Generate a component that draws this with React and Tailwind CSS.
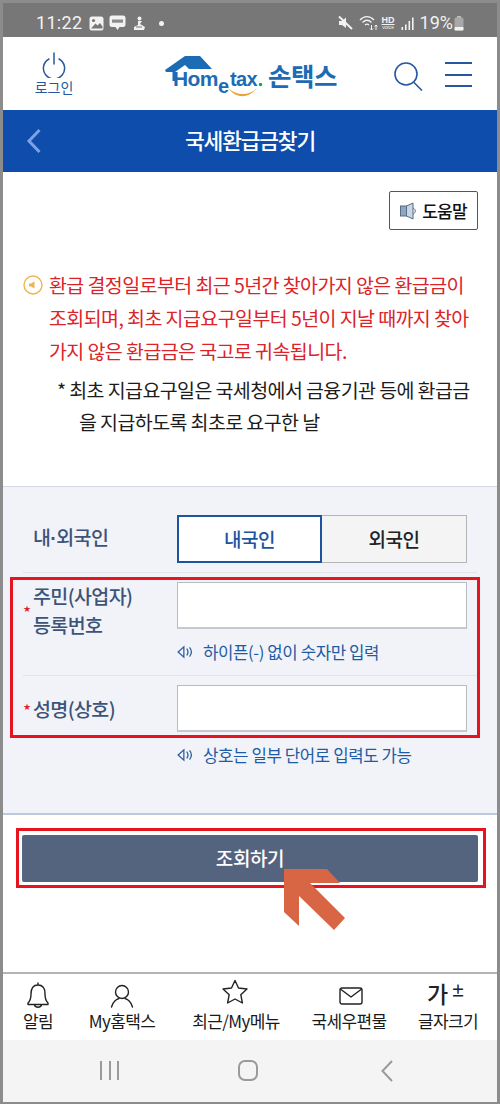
import React from "react";

const KR = { fontFamily: '"Noto Sans CJK KR","Noto Sans",sans-serif' };

function StatusBar() {
  return (
    <div className="h-[34px] bg-[#777777] flex items-center justify-between pl-[33px] pr-[33px] pt-[6px] text-[#f2f2f2] shrink-0">
      <div className="flex items-center">
        <span className="text-[18px] leading-none tracking-[0.3px] font-['Roboto']">11:22</span>
        <svg width="15" height="15" viewBox="0 0 15 15" className="ml-[7px]">
          <rect x="0.5" y="0.5" width="14" height="14" rx="2.5" fill="#f2f2f2" />
          <circle cx="4.5" cy="4.5" r="1.6" fill="#777" />
          <path d="M2 12.5 L6.5 7.5 L8.5 9.5 L11 7 L13.5 10.5 V12.5 Z" fill="#777" />
        </svg>
        <svg width="17" height="16" viewBox="0 0 17 16" className="ml-[5px]">
          <path d="M3 0.5 H14 A2.5 2.5 0 0 1 16.5 3 V9.5 A2.5 2.5 0 0 1 14 12 H10.5 L8.5 15 L6.5 12 H3 A2.5 2.5 0 0 1 0.5 9.5 V3 A2.5 2.5 0 0 1 3 0.5 Z" fill="#f2f2f2" />
          <rect x="3" y="4.5" width="11" height="3.2" fill="#8b8b8b" />
        </svg>
        <svg width="13" height="15" viewBox="0 0 13 15" className="ml-[7px]">
          <circle cx="6.5" cy="2.4" r="2" fill="#f2f2f2" />
          <path d="M5 5 L9 5 L7 8 L12 11 L11 14 L1 14 L1 11 L5 9 Z" fill="#f2f2f2" />
          <path d="M3 11 H9" stroke="#777" strokeWidth="1" />
        </svg>
        <span className="ml-[13px] w-[5px] h-[5px] rounded-full bg-[#f2f2f2]" />
      </div>
      <div className="flex items-center">
        <svg width="15" height="14" viewBox="0 0 15 14">
          <path d="M1 5 H4 L8 1.5 V12 L4 9 H1 Z" fill="#f2f2f2" />
          <path d="M1 0.5 L14 13" stroke="#f2f2f2" strokeWidth="2" />
        </svg>
        <svg width="20" height="16" viewBox="0 0 20 16" className="ml-[6px]" fill="none" stroke="#f2f2f2" strokeWidth="1.3">
          <path d="M1 5 C5 0.5 11 0.5 15 5" />
          <path d="M3.5 7.5 C6.5 4.5 9.5 4.5 12.5 7.5" />
          <path d="M6 10 C7.5 8.6 8.5 8.6 10 10" />
          <path d="M12.5 10 V15 M11 13.5 L12.5 15 L14 13.5 M17 15 V10 M15.5 11.5 L17 10 L18.5 11.5" strokeWidth="1" />
        </svg>
        <div className="ml-[2px] flex flex-col items-center leading-none w-[15px] font-['Liberation_Sans']">
          <span className="text-[9px] font-bold leading-[9px] underline">HD</span>
          <span className="text-[5px] leading-[5px]">voice</span>
        </div>
        <svg width="13" height="13" viewBox="0 0 13 13" className="ml-[5px]" fill="#f2f2f2">
          <rect x="0.5" y="10" width="1.6" height="3" />
          <rect x="4" y="7.5" width="1.6" height="5.5" />
          <rect x="7.5" y="4" width="1.6" height="9" />
          <rect x="11" y="0.5" width="1.6" height="12.5" />
        </svg>
        <span className="ml-[6px] text-[18px] leading-none font-['Roboto']">19%</span>
        <svg width="10" height="15" viewBox="0 0 10 15" className="ml-[1px]">
          <rect x="3" y="0" width="4" height="2" fill="#bdbdbd" />
          <rect x="0.5" y="1.5" width="9" height="13" rx="1.5" fill="#a8a8a8" />
          <rect x="0.5" y="11" width="9" height="3.5" rx="1" fill="#f2f2f2" />
        </svg>
      </div>
    </div>
  );
}

function Logo() {
  return (
    <div className="flex items-end h-[48px] relative">
      <div className="relative w-[100px] h-[48px]">
        <svg width="100" height="48" viewBox="0 0 100 48" className="absolute left-0 top-0">
          <path d="M0 15 L20 1 H35 L47 14 H24 L20 10 L10 17 V26 H7.5 V17 H1 Z" fill="#1c6cb5" />
          <path d="M63 33 C72 41 84 41 92 33 C84 44 71 44 63 33 Z" fill="#e9a33c" />
          <circle cx="95.5" cy="29.5" r="1.7" fill="#1ea048" />
        </svg>
        <span className="absolute left-[8px] top-[12px] text-[#1c6cb5] text-[21px] leading-[24px] font-bold tracking-[-0.6px] font-['Liberation_Sans']">Hom</span>
        <span className="absolute left-[53px] top-[19px] text-[#1c6cb5] text-[20px] leading-[24px] font-bold font-['Liberation_Sans']">e</span>
        <span className="absolute left-[65px] top-[12px] text-[#1c6cb5] text-[20px] leading-[24px] font-bold tracking-[-0.6px] font-['Liberation_Sans']">tax</span>
      </div>
      <span style={KR} className="ml-[3px] mb-[13px] text-[#1c6cb5] text-[25.5px] leading-[30px] font-bold tracking-[-0.5px]">손택스</span>
    </div>
  );
}

function Header() {
  return (
    <div className="h-[73px] bg-white flex items-start shrink-0 relative">
      <div className="w-[102px] flex flex-col items-center pt-[15px]">
        <svg width="24" height="26" viewBox="0 0 24 26" fill="none" stroke="#27589f" strokeWidth="1.5" strokeLinecap="round">
          <path d="M7 7 A10.6 10.6 0 1 0 17 7" />
          <path d="M12 1 V12" />
        </svg>
        <span style={KR} className="text-[#27589f] text-[14px] leading-[16px] mt-[1px]">로그인</span>
      </div>
      <div className="mt-[18px] ml-[60px]"><Logo /></div>
      <svg width="30" height="30" viewBox="0 0 30 30" fill="none" stroke="#27589f" strokeWidth="1.6" className="absolute left-[390px] top-[24px]">
        <circle cx="13" cy="13" r="11" />
        <path d="M20.5 21 L29 29.5" />
      </svg>
      <div className="absolute left-[442px] top-[25px] w-[27px] h-[25px] flex flex-col justify-between">
        <div className="h-[2px] bg-[#27589f]" />
        <div className="h-[2px] bg-[#27589f]" />
        <div className="h-[2px] bg-[#27589f]" />
      </div>
    </div>
  );
}

function TitleBar() {
  return (
    <div className="h-[62px] bg-[#0e4dab] flex items-center justify-center relative shrink-0">
      <svg width="16" height="26" viewBox="0 0 16 26" fill="none" stroke="#7ba3e3" strokeWidth="3" className="absolute left-[23px] top-[18px]">
        <path d="M13.5 2 L3 13 L13.5 24" />
      </svg>
      <span style={KR} className="text-white text-[21.5px] font-medium tracking-[-1.2px] leading-[28px] -mt-[3px]">국세환급금찾기</span>
    </div>
  );
}

function Help() {
  return (
    <div className="flex justify-end pr-[19px] pt-[19px]">
      <div className="w-[89px] h-[39px] border border-[#555] rounded-[2px] flex items-center justify-center bg-white">
        <svg width="18" height="18" viewBox="0 0 18 18" className="shrink-0">
          <rect x="0.5" y="4" width="6" height="10" fill="#8aa6c8" stroke="#5c6b7d" />
          <path d="M6.5 4 L13 1 V17 L6.5 14 Z" fill="#c6d7ea" stroke="#5c6b7d" />
          <path d="M13 6 C16 7 16 11 13 12" fill="none" stroke="#5c6b7d" />
        </svg>
        <span style={KR} className="ml-[4px] text-[#111] text-[17px] font-medium tracking-[-0.8px] leading-[22px]">도움말</span>
      </div>
    </div>
  );
}

function Notice() {
  return (
    <div style={KR} className="relative pl-[46px] pr-[10px] mt-[38px]">
      <svg width="20" height="20" viewBox="0 0 20 20" className="absolute left-[20px] top-[7px]">
        <circle cx="10" cy="10" r="9" fill="#fff" stroke="#efb451" strokeWidth="1.4" />
        <path d="M6 8.5 H8 L11.5 6.5 V13.5 L8 11.5 H6 Z" fill="#efb451" />
      </svg>
      <div className="text-[#dc2328] text-[19.5px] leading-[33px] tracking-[-0.58px] whitespace-nowrap">
        <div>환급 결정일로부터 최근 5년간 찾아가지 않은 환급금이</div>
        <div>조회되며, 최초 지급요구일부터 5년이 지날 때까지 찾아</div>
        <div>가지 않은 환급금은 국고로 귀속됩니다.</div>
      </div>
      <div className="text-[#1c1c1c] text-[19.5px] leading-[32px] tracking-[-0.6px] whitespace-nowrap mt-[7px] ml-[8px]">
        <div>* 최초 지급요구일은 국세청에서 금융기관 등에 환급금</div>
        <div className="pl-[22px]">을 지급하도록 최초로 요구한 날</div>
      </div>
    </div>
  );
}

function HintIcon() {
  return (
    <svg width="16" height="14" viewBox="0 0 14 12" fill="none" stroke="#2a5b9e" strokeWidth="1.1" className="shrink-0">
      <path d="M1 6 L6 1.5 V10.5 Z" />
      <path d="M8.5 3 C10 5 10 7 8.5 9 M11 2 C13 4.5 13 7.5 11 10" />
    </svg>
  );
}

function Hint({ children }) {
  return (
    <div style={KR} className="flex items-center mt-[12px] text-[#1f5ba3] text-[16.8px] leading-[22px] tracking-[-0.42px] whitespace-nowrap">
      <HintIcon />
      <span className="ml-[10px]">{children}</span>
    </div>
  );
}

function Star({ className }) {
  return <span className={"absolute left-0 text-[#e0202a] text-[9px] leading-none font-['DejaVu_Sans'] " + className}>★</span>;
}

function Form() {
  const label = "text-[#3d5478] text-[19.5px] font-medium tracking-[-0.6px] whitespace-nowrap";
  const input = "w-[290px] h-[47px] bg-white border border-[#b9bbc0] border-b-2 border-b-[#c6c8cc]";
  return (
    <div style={KR} className="h-[329px] bg-[#f1f3f9] border-t border-[#d4d8e4] border-b-2 border-b-[#bccadf] shrink-0 px-[20px]">
      <div className="h-[86px] flex items-start border-b border-[#e2e4ea] pl-[10px] pt-[28px]">
        <span className={label + " w-[144px] leading-[48px] -mt-[2px]"}>내<span className="font-['Liberation_Sans'] font-bold">·</span>외국인</span>
        <div className="flex h-[48px]">
          <div className="w-[145px] bg-white border-2 border-[#1d539f] flex items-center justify-center text-[#1d539f] text-[19px] font-medium tracking-[-0.5px]">내국인</div>
          <div className="w-[145px] bg-[#f4f4f4] border border-l-0 border-[#b5b5b5] flex items-center justify-center text-[#222] text-[19px] font-medium tracking-[-0.5px]">외국인</div>
        </div>
      </div>
      <div className="h-[103px] border-b border-[#e2e4ea] relative pl-[10px] flex">
        <Star className="top-[32px]" />
        <div className={label + " w-[144px] leading-[29px] pt-[8px]"}>
          <div>주민(사업자)</div>
          <div>등록번호</div>
        </div>
        <div className="pt-[9px]">
          <div className={input} />
          <Hint>하이픈(-) 없이 숫자만 입력</Hint>
        </div>
      </div>
      <div className="relative pl-[10px] flex">
        <Star className="top-[27px]" />
        <div className={label + " w-[144px] pt-[18px] leading-[29px]"}>
          <span>성명(상호)</span>
        </div>
        <div className="pt-[9px]">
          <div className={input} />
          <Hint>상호는 일부 단어로 입력도 가능</Hint>
        </div>
      </div>
    </div>
  );
}

function NavItem({ label, icon, className }) {
  return (
    <div className={"absolute top-0 flex flex-col items-center " + className}>
      <div className="h-[34px] flex items-end justify-center">{icon}</div>
      <span style={KR} className="text-[#1a1a1a] text-[17px] leading-[22px] tracking-[-0.6px] whitespace-nowrap mt-[2px]">{label}</span>
    </div>
  );
}

function BottomNav() {
  const s = { fill: "none", stroke: "#222", strokeWidth: 1.4, strokeLinejoin: "round", strokeLinecap: "round" };
  return (
    <div className="h-[68px] bg-white border-t-2 border-[#b4b4b4] relative shrink-0">
      <NavItem className="left-[20px] w-[30px]" label="알림" icon={
        <svg width="24" height="26" viewBox="0 0 24 26" {...s}><path d="M12 1 V3 M12 3 C6 3 5 8 5 12 C5 17 4 19 2 21 V22.5 H22 V21 C20 19 19 17 19 12 C19 8 18 3 12 3 Z M8.5 23 C9.5 26 14.5 26 15.5 23" /></svg>
      } />
      <NavItem className="left-[86px] w-[66px]" label="My홈택스" icon={
        <svg width="24" height="24" viewBox="0 0 24 24" {...s}><circle cx="12" cy="8" r="6.5" /><path d="M1.5 23 C3 17.5 7 15 9 14.5 M22.5 23 C21 17.5 17 15 15 14.5" /></svg>
      } />
      <NavItem className="left-[190px] w-[86px]" label="최근/My메뉴" icon={
        <svg width="26" height="26" viewBox="0 0 26 26" {...s} className="mb-[3px] -ml-[3px]"><path d="M13 1.5 L16.5 9 L25 10 L18.8 15.7 L20.4 24 L13 20 L5.6 24 L7.2 15.7 L1 10 L9.5 9 Z" /></svg>
      } />
      <NavItem className="left-[308px] w-[76px]" label="국세우편물" icon={
        <svg width="24" height="18" viewBox="0 0 24 18" {...s} className="mb-[3px] ml-[4px]"><rect x="1" y="1" width="22" height="16" rx="2" /><path d="M2 2.5 L12 10 L22 2.5" /></svg>
      } />
      <NavItem className="left-[415px] w-[60px]" label="글자크기" icon={
        <span style={KR} className="text-[#222] text-[23px] leading-[26px] font-medium -ml-[4px] mb-[2px] flex items-start">가<span className="text-[14px] leading-[20px] font-bold ml-[3px]">±</span></span>
      } />
    </div>
  );
}

function SystemNav() {
  return (
    <div className="flex-1 bg-[#f4f4f4] relative">
      <div className="absolute left-[97px] top-[21px] w-[19px] h-[19px] flex justify-between">
        <div className="w-[2px] bg-[#9a9a9a]" />
        <div className="w-[2px] bg-[#9a9a9a]" />
        <div className="w-[2px] bg-[#9a9a9a]" />
      </div>
      <div className="absolute left-[235px] top-[20px] w-[20px] h-[21px] border-2 border-[#9a9a9a] rounded-[7px]" />
      <svg width="12" height="22" viewBox="0 0 12 22" fill="none" stroke="#9a9a9a" strokeWidth="2" className="absolute left-[378px] top-[20px]">
        <path d="M11 1 L1.5 11 L11 21" />
      </svg>
    </div>
  );
}

export default function App() {
  return (
    <div className="relative w-[500px] h-[1104px] bg-[#8c8c8c] pl-[3px] pr-[3px] pt-[3px] pb-[2px] overflow-hidden">
      <div className="w-full h-full flex flex-col bg-white">
        <StatusBar />
        <Header />
        <TitleBar />
        <div className="h-[314px] bg-white shrink-0">
          <Help />
          <Notice />
        </div>
        <Form />
        <div style={KR} className="h-[157px] bg-white shrink-0 px-[19px] pt-[20px]">
          <div className="h-[47px] bg-[#55647e] rounded-[2px] flex items-center justify-center text-white text-[19px] font-medium tracking-[-0.4px]">조회하기</div>
        </div>
        <BottomNav />
        <SystemNav />
      </div>
      <div className="absolute left-[10px] top-[577px] w-[470px] h-[161px] border-[3px] border-[#e5141f] pointer-events-none" />
      <div className="absolute left-[16px] top-[828px] w-[470px] h-[60px] border-[3px] border-[#e5141f] pointer-events-none" />
      <svg width="62" height="62" viewBox="0 0 62 62" className="absolute left-[284px] top-[869px]">
        <path d="M0 0 H43 L56 14 H26 L61 49 L50 61 L15 27 V57 L0 43 Z" fill="#d86644" />
      </svg>
    </div>
  );
}
